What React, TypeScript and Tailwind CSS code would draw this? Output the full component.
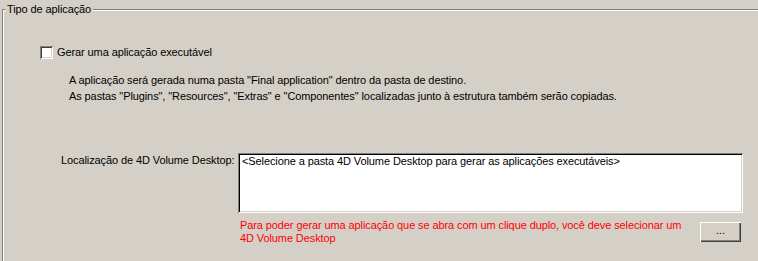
export default function App() {
  return (
    <div className="w-[758px] h-[261px] overflow-hidden bg-[#d4d0c8] text-[11px] leading-[13px] tracking-[-0.1px] text-black font-['Liberation_Sans',Arial,sans-serif]">
      <div className="relative ml-[2px] mt-[9px] h-[260px] border-l border-t border-[#808080]">
        <div className="h-full border-l border-t border-white">
          <span className="absolute left-[2px] top-[-7px] bg-[#d4d0c8] px-[2px]">
            Tipo de aplicação
          </span>

          <div className="ml-[36px] mt-[35px] flex items-center gap-[4px]">
            <div className="h-[13px] w-[13px] bg-white shadow-[inset_1px_1px_#808080,inset_-1px_-1px_#fff,inset_2px_2px_#404040,inset_-2px_-2px_#d4d0c8]" />
            <span>Gerar uma aplicação executável</span>
          </div>

          <div className="ml-[65px] mt-[15px] whitespace-nowrap">
            A aplicação será gerada numa pasta "Final application" dentro da pasta de destino.
          </div>
          <div className="ml-[65px] mt-[3px] whitespace-nowrap">
            As pastas "Plugins", "Resources", "Extras" e "Componentes" localizadas junto à estrutura também serão copiadas.
          </div>

          <div className="ml-[57px] mt-[50px] flex">
            <div className="w-[177px] pt-[1px] whitespace-nowrap">
              Localização de 4D Volume Desktop:
            </div>
            <div className="flex w-[505px] flex-col">
              <div className="h-[60px] bg-white px-[4px] pt-[2px] whitespace-nowrap shadow-[inset_1px_1px_#808080,inset_-1px_-1px_#fff,inset_2px_2px_#000,inset_-2px_-2px_#d4d0c8]">
                &lt;Selecione a pasta 4D Volume Desktop para gerar as aplicações executáveis&gt;
              </div>
              <div className="mt-[6px] flex items-start justify-between">
                <p className="ml-[2px] whitespace-nowrap text-[#ff0000]">
                  Para poder gerar uma aplicação que se abra com um clique duplo, você deve selecionar um
                  <br />
                  4D Volume Desktop
                </p>
                <button className="mr-[2px] mt-[3px] h-[20px] w-[41px] bg-[#d4d0c8] pb-[4px] leading-[13px] shadow-[inset_1px_1px_#fff,inset_-1px_-1px_#404040,inset_-2px_-2px_#808080]">
                  ...
                </button>
              </div>
            </div>
          </div>
        </div>
      </div>
    </div>
  );
}
